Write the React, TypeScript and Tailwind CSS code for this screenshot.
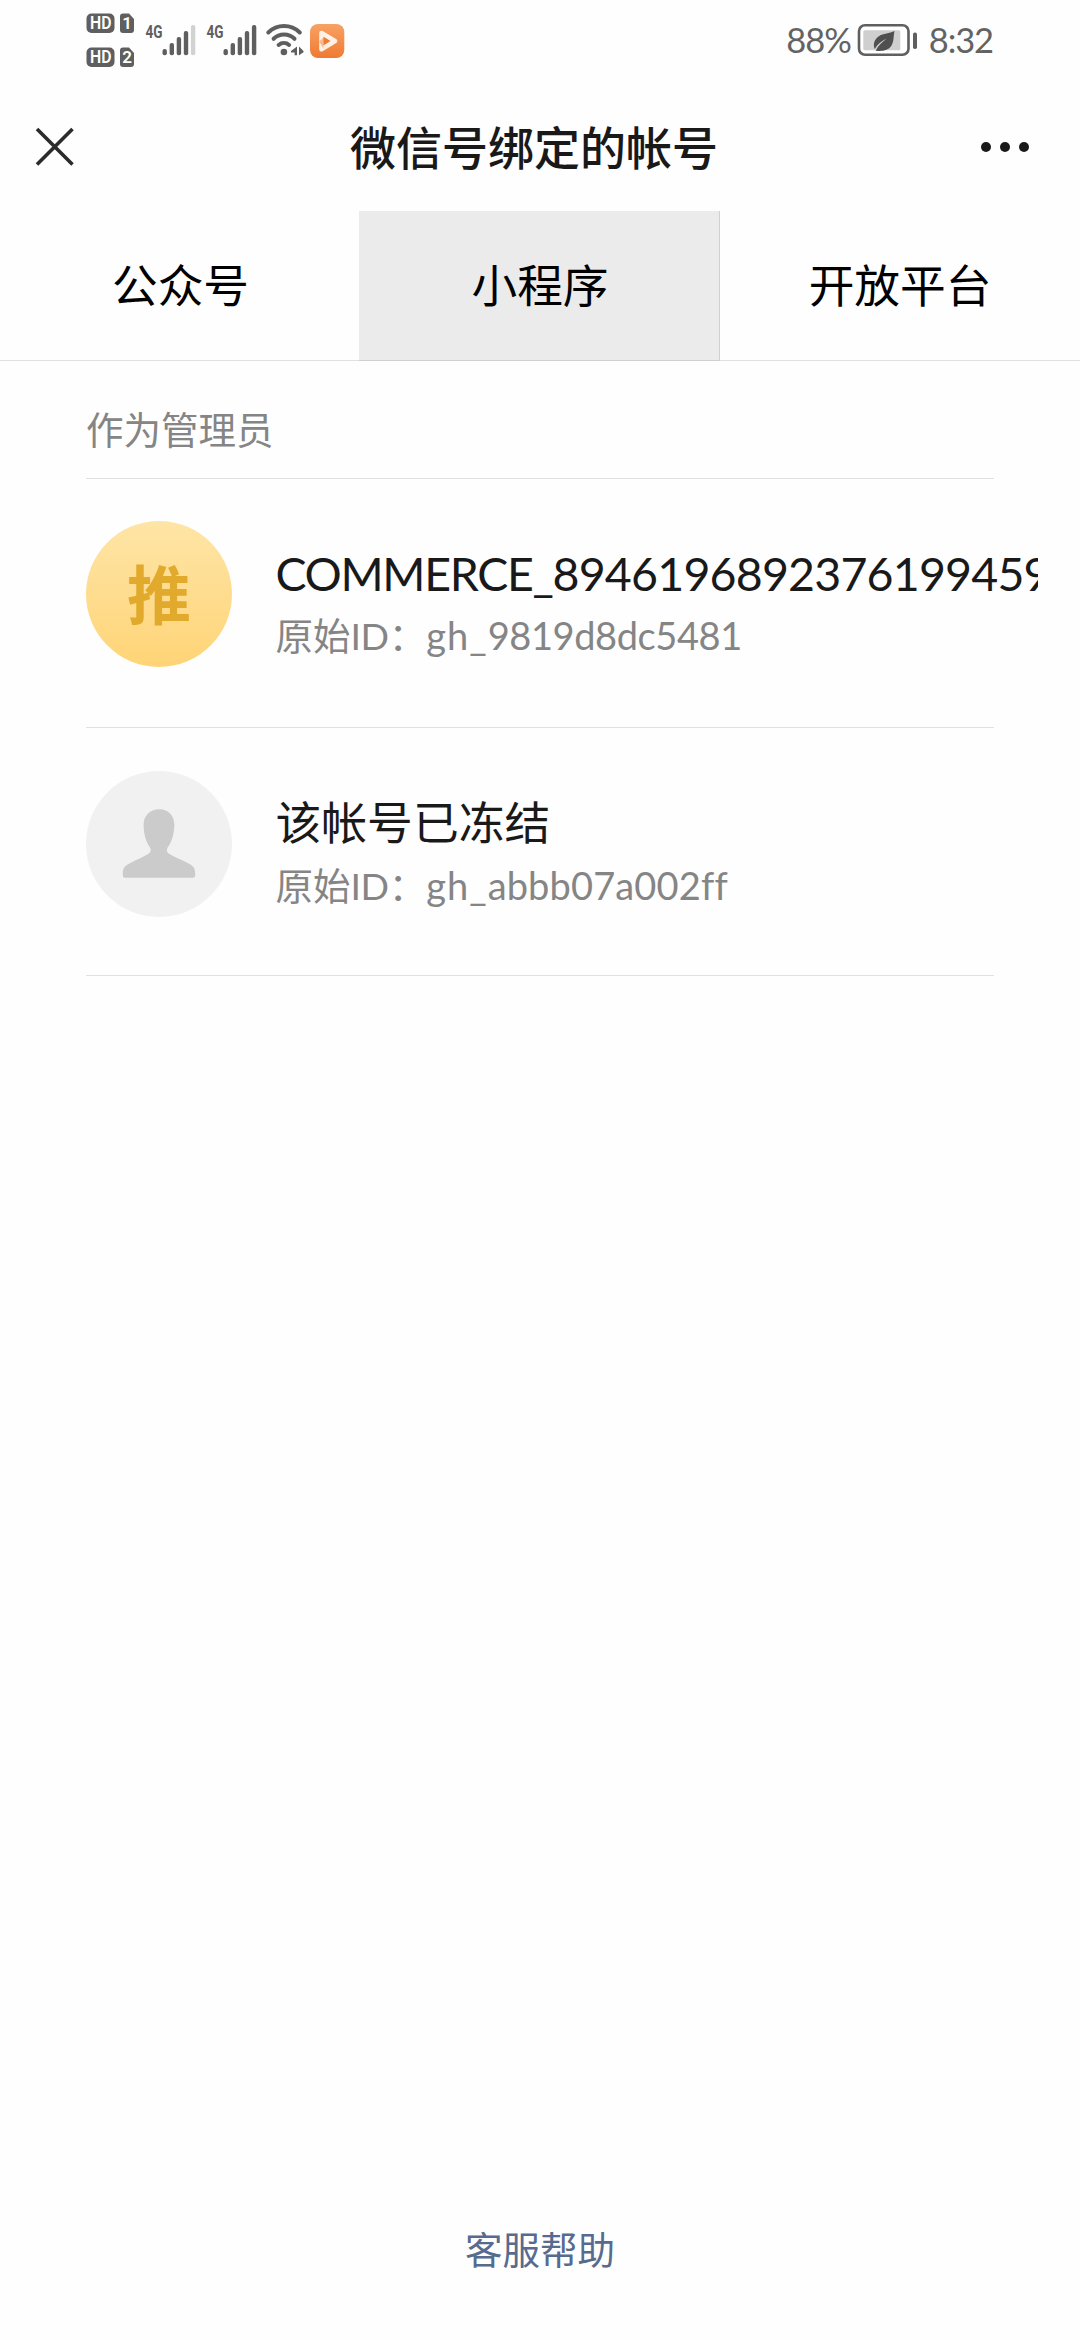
import type { ReactNode } from "react";

const INK = "#5f5f5f";

function HdBadge({ y, n }: { y: number; n: string }) {
  return (
    <g>
      <rect x="86.5" y={y} width="28" height="19.5" rx="5" fill={INK} />
      <text x="90" y={y + 15.8} textLength="21.5" lengthAdjust="spacingAndGlyphs" fill="#fff" fontSize="17.5" fontWeight="600" fontFamily="Roboto, sans-serif">
        HD
      </text>
      <path d={`M123 ${y}h6l5 5.5v11a3 3 0 0 1-3 3h-8a3 3 0 0 1-3-3v-13.500a3 3 0 0 1 3-3z`} fill={INK} />
      <text x="127" y={y + 15.8} textAnchor="middle" fill="#fff" fontSize="17" fontWeight="600" fontFamily="Roboto, sans-serif">
        {n}
      </text>
    </g>
  );
}

function Signal({ x, full }: { x: number; full?: boolean }) {
  const tops = [49, 43, 37, 31, 25];
  return (
    <g>
      <text x={x} y="38" textLength="17" lengthAdjust="spacingAndGlyphs" fill={INK} fontSize="18" fontWeight="700" fontFamily="Roboto, sans-serif">
        4G
      </text>
      {tops.map((t, i) => (
        <rect
          key={t}
          x={x + 17 + i * 7.1}
          y={t}
          width="4.4"
          height={55.3 - t}
          rx="2"
          fill={i === 4 && !full ? "#d2d2d2" : INK}
        />
      ))}
    </g>
  );
}

function StatusIcons() {
  return (
    <svg width="270" height="80" viewBox="80 0 270 80">
      <defs>
        <linearGradient id="play" x1="0" y1="0" x2="0" y2="1">
          <stop offset="0" stopColor="#f7a263" />
          <stop offset="1" stopColor="#f07a33" />
        </linearGradient>
      </defs>
      <HdBadge y={13.5} n="1" />
      <HdBadge y={47.5} n="2" />
      <Signal x={145.5} />
      <Signal x={206.5} full />
      <g fill="none" stroke={INK} strokeWidth="4" strokeLinecap="round">
        <path d="M268.300 32.500a22.500 22.500 0 0 1 31.500 0" />
        <path d="M273.600 38.800a15 15 0 0 1 20.900 0" />
        <path d="M278.600 45a8 8 0 0 1 10.500 0" />
      </g>
      <circle cx="283.900" cy="52" r="3.300" fill={INK} />
      <path d="M297 46.500v8.700h-2.400v-2.800h-3.600v-1.400zM299 46.500l4.500 4.500v1.200l-4.500 3z" fill={INK} />
      <rect x="310" y="24" width="34.300" height="34" rx="8" fill="url(#play)" />
      <path d="M321.500 33L335 41L321.500 49.200z" fill="none" stroke="#fff1e6" strokeWidth="4.600" strokeLinejoin="round" />
      <path d="M319.200 41.500L323.500 37.500v11.200z" fill="#f8b98c" />
      <path d="M323.500 36.800l6.500 4.200l-6.500 4.200z" fill="#ee7c38" />
    </svg>
  );
}

function Battery() {
  return (
    <svg width="62" height="34" viewBox="856 23 62 34">
      <rect x="858" y="25.200" width="49.500" height="29.600" rx="6" fill="#fff" stroke={INK} strokeWidth="2.600" />
      <rect x="862.300" y="30.300" width="37" height="20" rx="1.500" fill="#cfcfcf" />
      <path d="M893.500 31c-5 2.500-11 2-16 5.500c-4.500 3.200-5.500 8-3.800 12.500c3-5 7-8 12-10.500c-4.500 3.500-8.500 7-11 12.200c6 .6 12.500 .3 15.800-5.200c2.700-4.500 1.800-9.500 3-14.500z" fill="#4f4f4f" />
      <rect x="912" y="32.500" width="4" height="16.500" rx="1.800" fill={INK} />
    </svg>
  );
}

function Row({ avatar, name, id, last }: { avatar: ReactNode; name: ReactNode; id: ReactNode; last?: boolean }) {
  return (
    <div className={`flex border-b border-[#e0e0e0] ${last ? "h-[248px] pt-[43px]" : "h-[249px] pt-[42px]"}`}>
      <div className="w-[146px] h-[146px] shrink-0 rounded-full overflow-hidden">{avatar}</div>
      <div className="ml-[43.5px] mt-[21px] w-[762px] shrink-0 overflow-hidden whitespace-nowrap">
        <div className="h-[62px] leading-[62px] text-[45.800px] text-[#191919] flex">{name}</div>
        <div className="h-[63px] leading-[63px] text-[37.500px] text-[#858585]">
          原始<span className="tracking-[-0.400px]">ID</span>：{id}
        </div>
      </div>
    </div>
  );
}

export default function App() {
  return (
    <div className="w-[1080px] h-[2340px] overflow-hidden flex flex-col bg-[#fefefe] font-['Lato','Noto_Sans_CJK_SC',sans-serif]">
      <div className="h-[82px] shrink-0 flex pl-[80px] pr-[87px] justify-between">
        <StatusIcons />
        <div className="flex items-center text-[#636363] text-[34.500px] leading-[80px] h-[80px]">
          <span className="tracking-[-1.100px]">88%</span>
          <span className="ml-[6px]"><Battery /></span>
          <span className="ml-[10px] tracking-[-1.100px]">8:32</span>
        </div>
      </div>

      <div className="h-[129px] shrink-0 flex items-center justify-between pl-[35px] pr-[50px]">
        <svg width="40" height="40" viewBox="0 0 40 40" stroke="#2b2b2b" strokeWidth="3.600">
          <path d="M2 2L37.500 37.500M37.500 2L2 37.500" />
        </svg>
        <div className="text-[46px] leading-[60px] font-medium text-[#191919] mt-[3px] ml-[13px]">微信号绑定的帐号</div>
        <svg width="50" height="12" viewBox="0 0 50 12" fill="#191919">
          <circle cx="6" cy="6" r="5" />
          <circle cx="25" cy="6" r="5" />
          <circle cx="44" cy="6" r="5" />
        </svg>
      </div>

      <div className="h-[150px] shrink-0 flex border-b border-[#e0e0e0] text-[45.700px] text-black text-center leading-[149px]">
        <div className="w-[359px] pl-[2px]">公众号</div>
        <div className="w-[361px] pl-[2px] -mb-px bg-[#ebebeb] border-r border-b border-[#d0d0d0]">小程序</div>
        <div className="w-[360px]">开放平台</div>
      </div>

      <div className="flex-1 px-[86px]">
        <div className="h-[118px] pt-[21px] border-b border-[#e0e0e0] text-[37.500px] leading-[96px] text-[#858585]">作为管理员</div>
        <Row
          avatar={
            <div className="w-full h-full bg-linear-to-b from-[#fee5a6] to-[#ffd476] flex items-center justify-center pt-[2px] text-[64px] leading-none font-bold text-[#e1aa2c]">
              推
            </div>
          }
          name={
            <span className="text-[46.500px]">
              <span className="tracking-[-1.320px]">COMMERCE_</span>
              <span className="tracking-[-0.800px]">8946196892376199459</span>
            </span>
          }
          id={
            <span className="text-[38px]">
              <span className="tracking-[1px]">gh_</span>
              <span className="tracking-[-0.400px]">9819d8dc5481</span>
            </span>
          }
        />
        <Row
          last
          avatar={
            <svg className="w-full h-full bg-[#f1f1f1]" viewBox="86 771 146 146">
              <path
                d="M159.300 809.300c9.500 0 15 6.500 15 15.500c0 10-3 18-6.500 22.500c-1.500 2.500-1.200 5 .8 6.300c5.500 3.400 13 6.400 20 9.800c5 2.500 6.600 5 6.600 10v2.200q0 2.200-2.200 2.200h-68q-2.200 0-2.200-2.200v-2.200c0-5 1.600-7.500 6.600-10c7-3.400 14-6.400 19.500-9.800c2-1.300 2.500-3.800 1-6.300c-3.500-4.500-6.300-12.500-6.300-22.500c0-9 6.200-15.500 15.700-15.500z"
                fill="#cbcbcb"
              />
            </svg>
          }
          name="该帐号已冻结"
          id={
            <span className="text-[38px]">
              <span className="tracking-[1px]">gh_</span>
              <span className="tracking-[0.150px]">abbb07a002ff</span>
            </span>
          }
        />
      </div>

      <div className="h-[120px] shrink-0 text-center text-[37.500px] leading-[60px] text-[#576b8f]">客服帮助</div>
    </div>
  );
}
